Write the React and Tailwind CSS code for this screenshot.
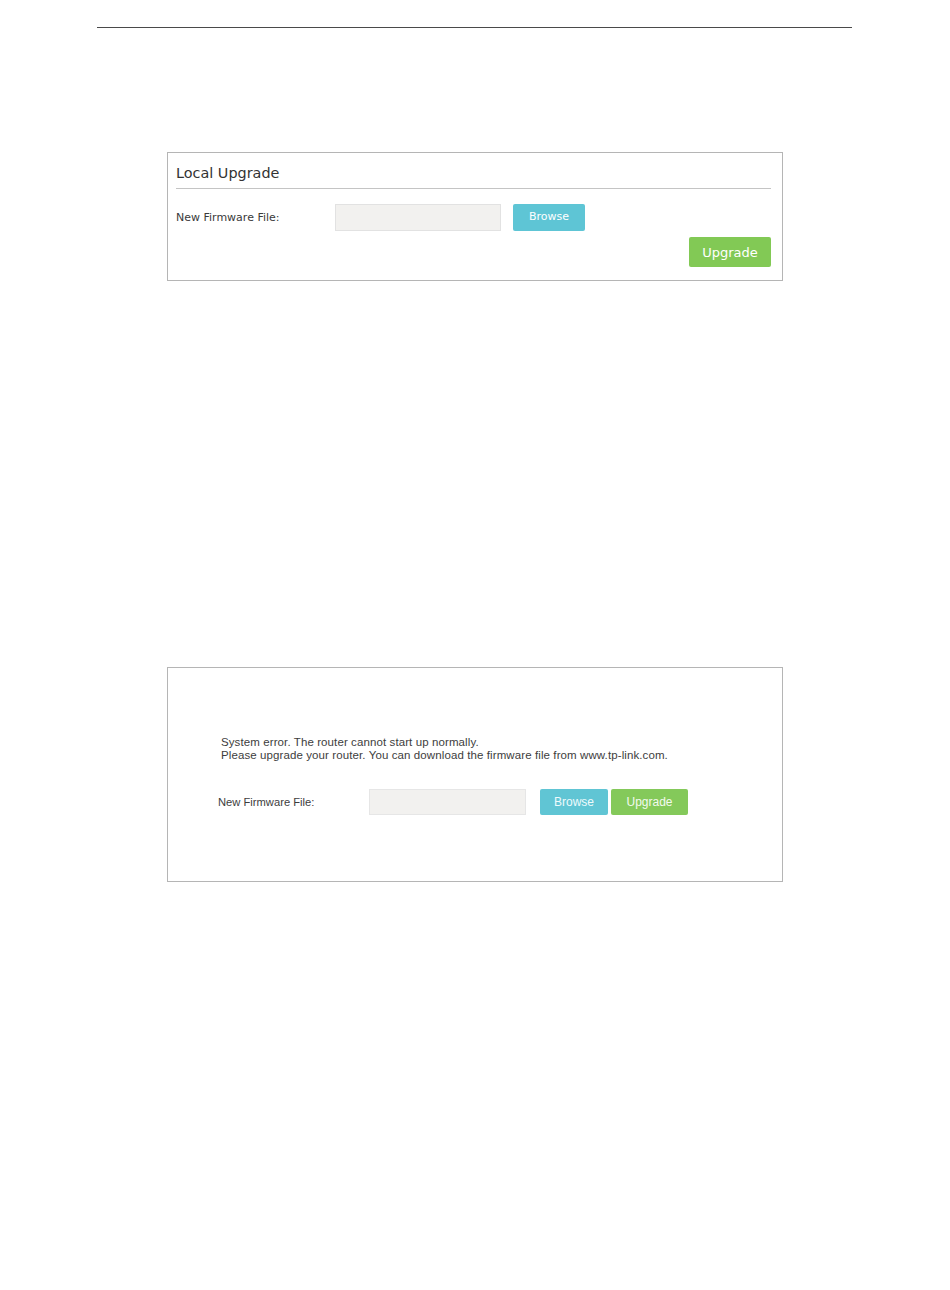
import React from 'react'

// Firmware upgrade screens, as shown in the manual page

function LocalUpgrade() {
  return (
    <div className="ml-[167px] mt-[124px] w-[616px] h-[129px] border border-[#b5b5b5] pl-[8px] pr-[11px]">
      {/* Title */}
      <div className="pt-[11px] pb-[6px] border-b border-[#c4c4c4] text-[14.4px] leading-[18px] text-[#333]">
        Local Upgrade
      </div>

      {/* File row */}
      <div className="mt-[15px] flex items-center h-[27px]">
        <div className="w-[159px] pt-px text-[11px] text-[#3a3a3a]">New Firmware File:</div>
        <div className="w-[166px] h-[27px] bg-[#f2f1ef] border border-[#e2e2e2]" />
        <button className="ml-[12px] w-[72px] h-[27px] rounded-[2px] bg-[#5ec5d5] text-white text-[11px]">
          Browse
        </button>
      </div>

      {/* Upgrade */}
      <div className="mt-[6px] flex justify-end">
        <button className="w-[82px] h-[30px] pt-px rounded-[2px] bg-[#82c955] text-white text-[13px]">
          Upgrade
        </button>
      </div>
    </div>
  )
}

function RecoveryUpgrade() {
  return (
    <div className="ml-[167px] mt-[386px] w-[616px] h-[215px] border border-[#b5b5b5] font-['Liberation_Sans',Arial,sans-serif]">
      <div className="pl-[53px] pt-[68px] text-[11.5px] leading-[13px] tracking-[0.1px] text-[#3d3d3d]">
        <p>System error. The router cannot start up normally.</p>
        <p>Please upgrade your router. You can download the firmware file from www.tp-link.com.</p>
      </div>

      <div className="pl-[50px] mt-[27px] flex items-center h-[26px]">
        <div className="w-[151px] text-[11.2px] text-[#3d3d3d]">New Firmware File:</div>
        <div className="w-[157px] h-[26px] bg-[#f2f1ef] border border-[#e6e6e6]" />
        <button className="ml-[14px] w-[68px] h-[26px] rounded-[2px] bg-[#60c5d4] text-[#eefafc] text-[12px]">
          Browse
        </button>
        <button className="ml-[3px] w-[77px] h-[26px] rounded-[2px] bg-[#84c95a] text-[#f3faee] text-[12px]">
          Upgrade
        </button>
      </div>
    </div>
  )
}

export default function App() {
  return (
    <div className="min-h-[1290px] bg-white font-['DejaVu_Sans',Verdana,sans-serif]">
      {/* Page header rule */}
      <div className="pt-[27px]">
        <div className="ml-[97px] w-[755px] h-px bg-[#4a4a4a]" />
      </div>

      <LocalUpgrade />
      <RecoveryUpgrade />
    </div>
  )
}
